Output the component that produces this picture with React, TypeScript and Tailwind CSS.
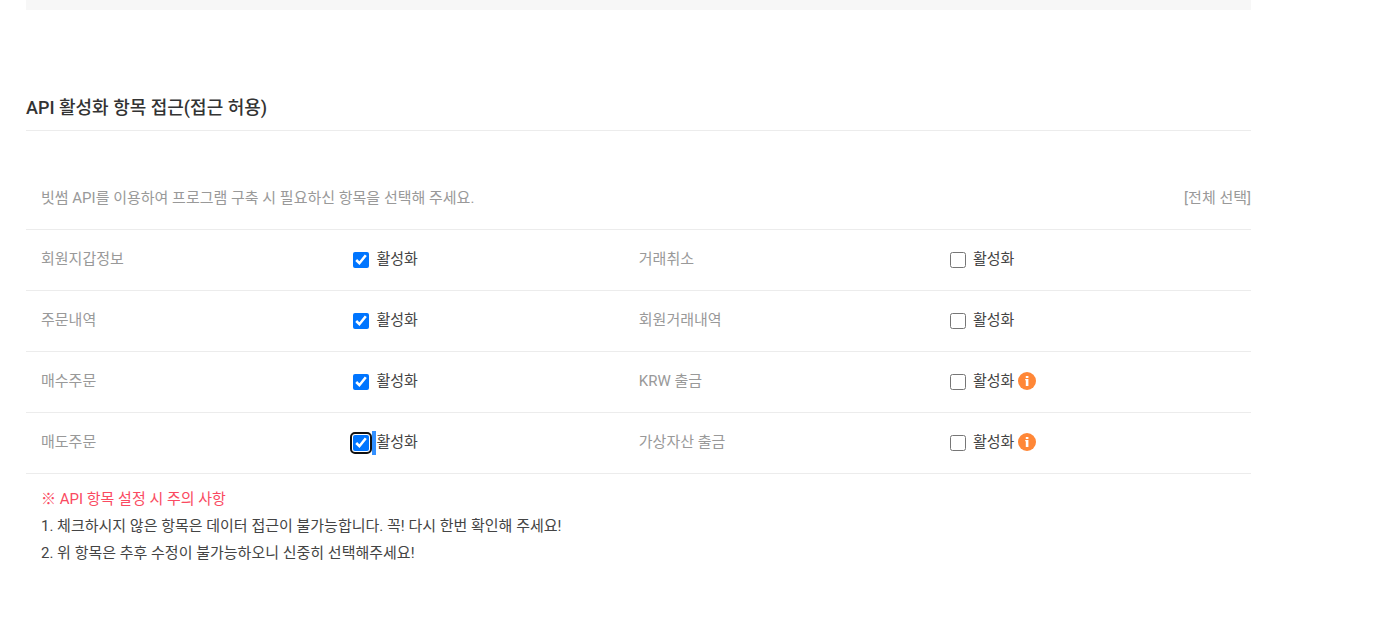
import { useState } from "react";
import clsx from "clsx";

interface Permission {
  id: string;
  name: string;
  info?: boolean;
}

// 한 행에 두 항목씩 표시
const ROWS: [Permission, Permission][] = [
  [{ id: "wallet", name: "회원지갑정보" }, { id: "cancel", name: "거래취소" }],
  [{ id: "orders", name: "주문내역" }, { id: "transactions", name: "회원거래내역" }],
  [{ id: "buy", name: "매수주문" }, { id: "krw", name: "KRW 출금", info: true }],
  [{ id: "sell", name: "매도주문" }, { id: "coin", name: "가상자산 출금", info: true }],
];

const InfoIcon = () => (
  <svg width="18" height="18" viewBox="0 0 18 18" role="img" aria-label="안내">
    <circle cx="9" cy="9" r="9" fill="#FF8737" />
    <rect x="7.8" y="4" width="2.6" height="2" fill="#fff" />
    <path d="M7.2 7H10.4V14H7.8V8.2H7.2Z" fill="#fff" />
  </svg>
);

interface PermissionCellsProps {
  item: Permission;
  checked: boolean;
  active: boolean;
  onToggle: (id: string) => void;
}

function PermissionCells({ item, checked, active, onToggle }: PermissionCellsProps) {
  return (
    <>
      <th scope="row" className="px-[15px] pb-0.5 text-left font-normal text-[#999]">
        <label htmlFor={item.id}>{item.name}</label>
      </th>
      <td className="px-[15px]">
        <div className="flex items-center">
          <span
            className={clsx(
              "mr-[3px] flex rounded-xs",
              active && "outline-2 outline-offset-1 outline-[#101010]"
            )}
          >
            <input
              id={item.id}
              type="checkbox"
              checked={checked}
              onChange={() => onToggle(item.id)}
              className="size-4 outline-none"
            />
          </span>
          <span className={clsx("h-6 w-1", active && "bg-[#3390ff]")} />
          <label htmlFor={item.id} className="pb-0.5 text-[#444]">
            활성화
          </label>
          {item.info && (
            <span className="ml-1 pb-0.5">
              <InfoIcon />
            </span>
          )}
        </div>
      </td>
    </>
  );
}

export default function App() {
  const [selected, setSelected] = useState<string[]>(["wallet", "orders", "buy", "sell"]);
  const [active, setActive] = useState("sell");

  const toggle = (id: string) => {
    setActive(id);
    setSelected((prev) => (prev.includes(id) ? prev.filter((v) => v !== id) : [...prev, id]));
  };

  const selectAll = () => setSelected(ROWS.flat().map((item) => item.id));

  return (
    <main
      lang="ko"
      className="bg-white pr-[139px] pl-[26px] font-[Roboto,'Noto_Sans_CJK_KR',sans-serif] text-[15px] leading-6 text-[#444]"
    >
      <div className="h-[10px] bg-[#f7f7f7]" />

      <h2 className="mt-20 border-b border-[#ececec] pt-1 pb-2 text-[18px] leading-7 font-medium text-[#333]">
        API 활성화 항목 접근(접근 허용)
      </h2>

      <div className="flex items-center justify-between pt-[55px] pb-[19px] pl-[15px] text-[#999]">
        <p>빗썸 API를 이용하여 프로그램 구축 시 필요하신 항목을 선택해 주세요.</p>
        <button type="button" onClick={selectAll} className="cursor-pointer">
          [전체 선택]
        </button>
      </div>

      <table className="w-full table-fixed border-t border-[#ececec]">
        <colgroup>
          <col className="w-[25.5%]" />
          <col className="w-[23.3%]" />
          <col className="w-[25.4%]" />
          <col />
        </colgroup>
        <tbody>
          {ROWS.map((row) => (
            <tr key={row[0].id} className="h-[61px] border-b border-[#ececec]">
              {row.map((item) => (
                <PermissionCells
                  key={item.id}
                  item={item}
                  checked={selected.includes(item.id)}
                  active={active === item.id}
                  onToggle={toggle}
                />
              ))}
            </tr>
          ))}
        </tbody>
      </table>

      {/* 주의 사항 */}
      <div className="pt-3 pb-10 pl-[15px] leading-[27px]">
        <p className="text-[#fa4a61]">※ API 항목 설정 시 주의 사항</p>
        <p>1. 체크하시지 않은 항목은 데이터 접근이 불가능합니다. 꼭! 다시 한번 확인해 주세요!</p>
        <p>2. 위 항목은 추후 수정이 불가능하오니 신중히 선택해주세요!</p>
      </div>
    </main>
  );
}
